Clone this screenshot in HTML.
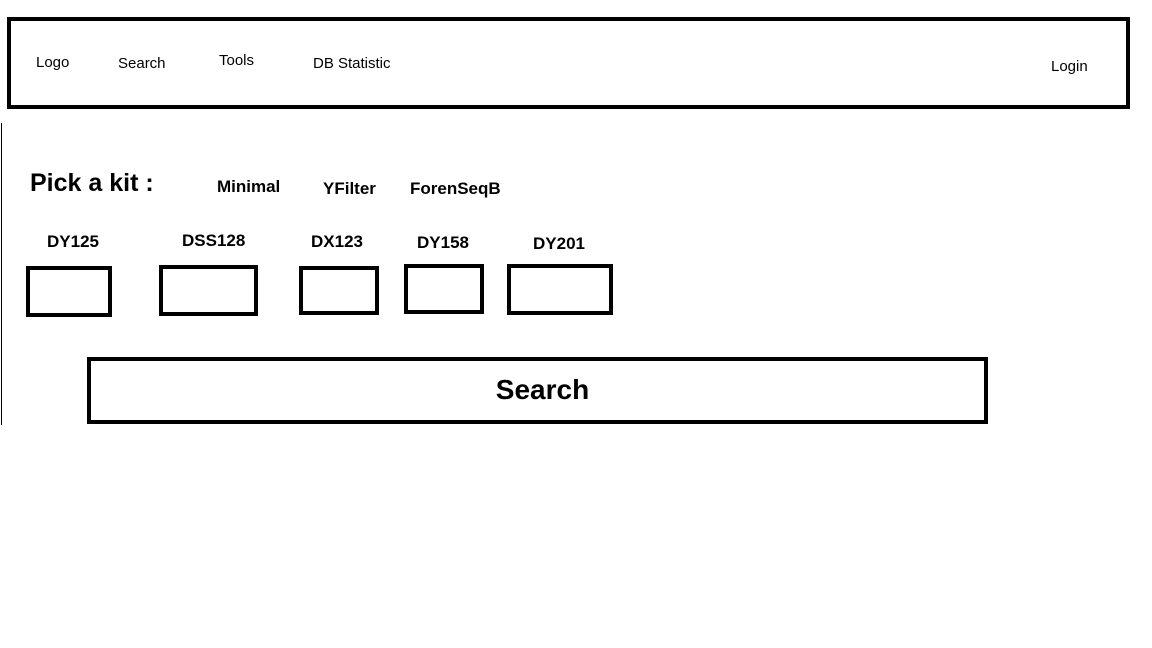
<!DOCTYPE html>
<html><head><meta charset="utf-8"><style>
body{margin:0;width:1152px;height:648px;background:#fff;position:relative;overflow:hidden;font-family:"Liberation Sans",sans-serif;color:#000}
.a{position:absolute;white-space:nowrap;line-height:1}
.box{position:absolute;border:4px solid #000;box-sizing:border-box}
.n{font-size:15px}
.b{font-weight:bold;font-size:17px}
</style></head><body>
<div class="box" style="left:7px;top:17px;width:1123px;height:92px"></div>
<div class="a n" style="left:36px;top:55px">Logo</div>
<div class="a n" style="left:118px;top:56px">Search</div>
<div class="a n" style="left:219px;top:53px">Tools</div>
<div class="a n" style="left:313px;top:56px">DB Statistic</div>
<div class="a n" style="left:1051px;top:59px">Login</div>
<div style="position:absolute;left:1px;top:123px;width:1px;height:302px;background:#000"></div>
<div class="a" style="left:30px;top:171px;font-size:25px;font-weight:bold">Pick a kit :</div>
<div class="a b" style="left:217px;top:178px">Minimal</div>
<div class="a b" style="left:323px;top:180px">YFilter</div>
<div class="a b" style="left:410px;top:180px">ForenSeqB</div>
<div class="a b" style="left:47px;top:233px">DY125</div>
<div class="a b" style="left:182px;top:232px">DSS128</div>
<div class="a b" style="left:311px;top:233px">DX123</div>
<div class="a b" style="left:417px;top:234px">DY158</div>
<div class="a b" style="left:533px;top:235px">DY201</div>
<div class="box" style="left:26px;top:266px;width:86px;height:51px"></div>
<div class="box" style="left:159px;top:265px;width:99px;height:51px"></div>
<div class="box" style="left:299px;top:266px;width:80px;height:49px"></div>
<div class="box" style="left:404px;top:264px;width:80px;height:50px"></div>
<div class="box" style="left:507px;top:264px;width:106px;height:51px"></div>
<div class="box" style="left:87px;top:357px;width:901px;height:67px"></div>
<div class="a" style="left:87px;width:911px;top:376px;text-align:center;font-size:28px;font-weight:bold">Search</div>
</body></html>
